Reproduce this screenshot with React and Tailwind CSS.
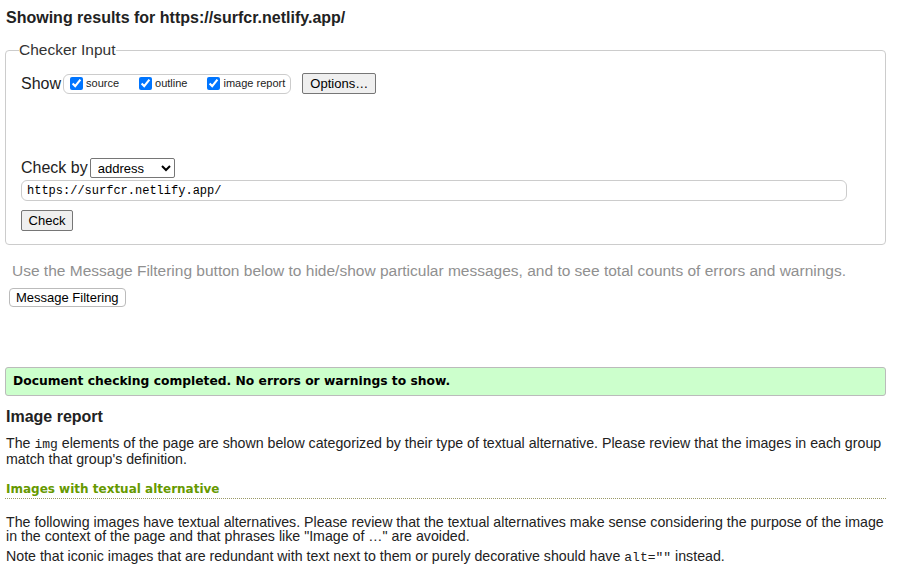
function CheckItem({ label, className }) {
  return (
    <label className={`flex items-center ${className || ""}`}>
      <input type="checkbox" defaultChecked className="m-0 h-[13px] w-[13px]" />
      <span className="ml-[3px] text-[11px] leading-[13px] text-[#222]">{label}</span>
    </label>
  );
}

function GrayButton({ children, className }) {
  return (
    <button
      type="button"
      className={`rounded-[2px] border border-[#767676] bg-[#efefef] text-[13px] leading-[15px] text-black ${className || ""}`}
    >
      {children}
    </button>
  );
}

export default function App() {
  return (
    <div className="min-h-screen bg-white pl-[5px] pr-[23px] font-['Liberation_Sans',Arial,sans-serif] text-[#222]">
      <h2 className="pl-[1px] pt-[8px] text-[16px] font-bold leading-[19px] text-[#222]">
        Showing results for https://surfcr.netlify.app/
      </h2>

      <fieldset className="mt-[14px] rounded-[4px] border border-[#ccc] pb-[12px] pl-[15px] pr-[38px]">
        <legend className="-ml-[2px] p-0 text-[15.5px] leading-[18px] text-[#333]">Checker Input</legend>

        <div className="mt-[14px] flex h-[21px] items-center">
          <span className="text-[16px] leading-[18px] text-[#222]">Show</span>
          <div className="ml-[2px] flex h-[20px] items-center rounded-[6px] border border-[#ccc] pl-[6px] pr-[5px]">
            <CheckItem label="source" />
            <CheckItem label="outline" className="ml-[20px]" />
            <CheckItem label="image report" className="ml-[20px]" />
          </div>
          <GrayButton className="ml-[11px] h-[21px] w-[74px]">Options…</GrayButton>
        </div>

        <div className="mt-[64px] flex items-center">
          <span className="text-[16px] leading-[18px] text-[#222]">Check by</span>
          <select
            defaultValue="address"
            className="ml-[2px] h-[20px] w-[85px] rounded-[2px] border border-[#767676] bg-white pl-[3px] text-[13px] text-black"
          >
            <option value="address">address</option>
            <option value="file">file upload</option>
            <option value="text">text input</option>
          </select>
        </div>

        <div className="mt-[2px] flex h-[21px] items-center rounded-[6px] border border-[#ccc] pl-[5px] font-['Liberation_Mono','DejaVu_Sans_Mono',monospace] text-[12px] text-black">
          https://surfcr.netlify.app/
        </div>

        <GrayButton className="mt-[9px] h-[21px] w-[52px]">Check</GrayButton>
      </fieldset>

      <p className="mt-[17px] pl-[7px] text-[15.5px] leading-[18px] text-[#909090]">
        Use the Message Filtering button below to hide/show particular messages, and to see total counts of errors and warnings.
      </p>

      <button
        type="button"
        className="ml-[4px] mt-[8px] h-[19px] rounded-[4px] border border-[#bbb] bg-white px-[6px] text-[13px] leading-[15px] text-black"
      >
        Message Filtering
      </button>

      <div className="mt-[58px] flex h-[29px] items-center rounded-[3px] border border-[#bbb] bg-[#ccffcc] pl-[7px] font-['DejaVu_Sans',Verdana,sans-serif] text-[12.3px] font-bold text-black">
        Document checking completed. No errors or warnings to show.
      </div>

      <h3 className="mt-[11px] pl-[1px] text-[16px] font-bold leading-[19px] text-[#222]">Image report</h3>

      <p className="mt-[10px] pl-[1px] text-[14.2px] leading-[15px] text-[#222]">
        The <span className="font-['Liberation_Mono',monospace] text-[13px]">img</span> elements of the page are shown below categorized by their type of textual alternative. Please review that the images in each group match that group's definition.
      </p>

      <h4 className="mt-[14px] border-b border-dotted border-[#999966] pl-[1px] font-['DejaVu_Sans',Verdana,sans-serif] text-[12px] font-bold leading-[17px] text-[#669900]">
        Images with textual alternative
      </h4>

      <p className="mt-[16px] pl-[1px] text-[14.2px] leading-[14px] text-[#222]">
        The following images have textual alternatives. Please review that the textual alternatives make sense considering the purpose of the image in the context of the page and that phrases like "Image of …" are avoided.
      </p>
      <p className="mt-[6px] pl-[1px] text-[14.2px] leading-[14px] text-[#222]">
        Note that iconic images that are redundant with text next to them or purely decorative should have{" "}
        <span className="font-['Liberation_Mono',monospace] text-[13px]">alt=""</span> instead.
      </p>
    </div>
  );
}
